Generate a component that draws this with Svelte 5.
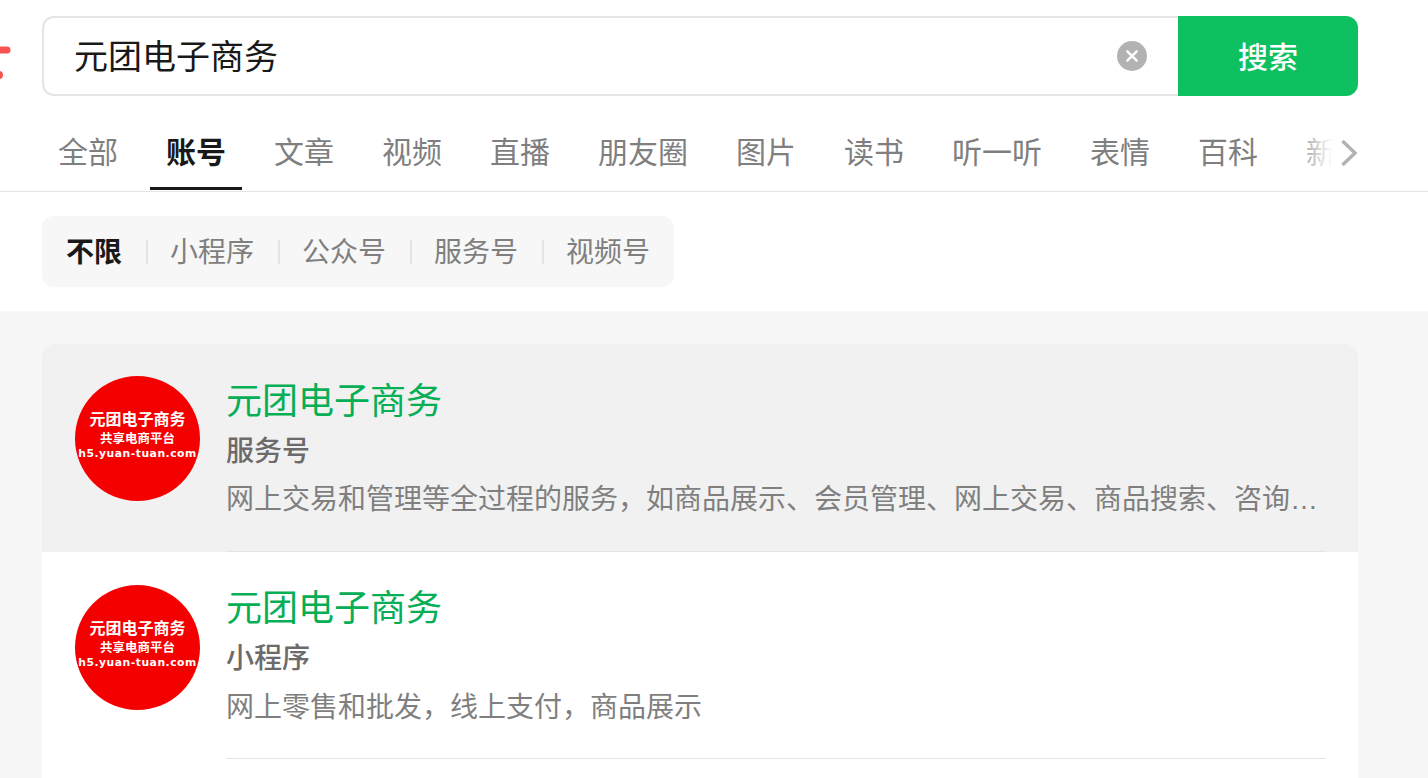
<script lang="ts">
	const tabs = ['全部', '账号', '文章', '视频', '直播', '朋友圈', '图片', '读书', '听一听', '表情', '百科', '新闻'];
	const filters = ['不限', '小程序', '公众号', '服务号', '视频号'];
	const results = [
		{
			kind: '服务号',
			desc: '网上交易和管理等全过程的服务，如商品展示、会员管理、网上交易、商品搜索、咨询洽谈和在线支付',
			active: true
		},
		{ kind: '小程序', desc: '网上零售和批发，线上支付，商品展示', active: false }
	];
</script>

<div class="page">
	<header class="search-row">
		<div class="logo">
			<svg width="42" height="80" viewBox="0 0 42 80" aria-hidden="true">
				<path d="M-4 34 L7 34" stroke="#fa5151" stroke-width="7" stroke-linecap="round" fill="none" />
				<path d="M-6 59 L-1 59" stroke="#fa5151" stroke-width="8" stroke-linecap="round" fill="none" />
			</svg>
		</div>
		<form class="search">
			<div class="field">
				<input type="text" value="元团电子商务" />
				<span class="clear">
					<svg width="30" height="30" viewBox="0 0 30 30" aria-hidden="true">
						<circle cx="15" cy="15" r="15" fill="#b2b2b2" />
						<path d="M10.3 10.3 L19.7 19.7 M19.7 10.3 L10.3 19.7" stroke="#fff" stroke-width="2.4" stroke-linecap="round" />
					</svg>
				</span>
			</div>
			<button type="button" class="submit">搜索</button>
		</form>
	</header>

	<nav class="tabs">
		<div class="tab-list">
			{#each tabs as tab, i}
				<span class="tab" class:current={i === 1}>{tab}</span>
			{/each}
		</div>
		<div class="more">
			<svg width="18" height="28" viewBox="0 0 18 28" aria-hidden="true">
				<path d="M2.5 2 L15 14 L2.5 26" stroke="#b2b2b2" stroke-width="3.4" fill="none" />
			</svg>
		</div>
	</nav>

	<section class="filter-wrap">
		<div class="filters">
			{#each filters as item, i}
				{#if i > 0}<span class="sep"></span>{/if}
				<span class="filter" class:on={i === 0}>{item}</span>
			{/each}
		</div>
	</section>

	<main class="results">
		<div class="card">
			{#each results as row}
				<article class="row" class:active={row.active}>
					<div class="avatar">
						<span class="a1">元团电子商务</span>
						<span class="a2">共享电商平台</span>
						<span class="a3">h5.yuan-tuan.com</span>
					</div>
					<div class="info">
						<h3>元团电子商务</h3>
						<p class="kind">{row.kind}</p>
						<p class="desc">{row.desc}</p>
					</div>
				</article>
			{/each}
		</div>
	</main>
</div>

<style>
	:global(body) {
		margin: 0;
		background: #fff;
	}
	.page {
		height: 778px;
		overflow: hidden;
		display: flex;
		flex-direction: column;
		font-family: "Liberation Sans", "Noto Sans CJK SC", sans-serif;
		color: #191919;
	}
	.search-row {
		display: flex;
		padding: 16px 70px 0 0;
	}
	.logo {
		width: 42px;
		height: 80px;
		flex: none;
	}
	.logo svg {
		display: block;
	}
	.search {
		flex: 1;
		display: flex;
		height: 80px;
		margin: 0;
	}
	.field {
		flex: 1;
		display: flex;
		align-items: center;
		box-sizing: border-box;
		border: 2px solid #e5e5e5;
		border-right: 0;
		border-radius: 12px 0 0 12px;
		padding: 0 31px 0 30px;
	}
	.field input {
		flex: 1;
		min-width: 0;
		border: 0;
		outline: 0;
		padding: 0 0 4px;
		background: none;
		font: inherit;
		font-size: 34px;
		color: #191919;
	}
	.clear {
		display: block;
		width: 30px;
		height: 30px;
	}
	.clear svg {
		display: block;
	}
	.submit {
		width: 180px;
		border: 0;
		border-radius: 0 12px 12px 0;
		background: #0dc160;
		color: #fff;
		font: inherit;
		font-size: 30px;
		font-weight: 500;
		padding: 0 0 2px;
	}
	.tabs {
		position: relative;
		height: 96px;
		box-sizing: border-box;
		border-bottom: 1px solid #e5e5e5;
		padding-left: 42px;
		padding-right: 70px;
	}
	.tab-list {
		display: flex;
		gap: 16px;
		height: 95px;
		overflow: hidden;
	}
	.tab {
		flex: none;
		box-sizing: border-box;
		height: 94px;
		padding: 35px 16px 0;
		font-size: 30px;
		line-height: 44px;
		color: #7f7f7f;
		border-bottom: 3px solid transparent;
	}
	.tab.current {
		color: #191919;
		font-weight: 700;
		border-bottom-color: #191919;
	}
	.more {
		position: absolute;
		top: 0;
		right: 70px;
		width: 60px;
		height: 95px;
		display: flex;
		justify-content: flex-end;
		align-items: flex-start;
		padding-top: 43px;
		box-sizing: border-box;
		background: linear-gradient(to right, rgba(255, 255, 255, 0.2), #fff 58%);
	}
	.filter-wrap {
		padding: 24px 70px 24px 42px;
	}
	.filters {
		display: inline-flex;
		align-items: center;
		height: 71px;
		padding: 0 24px;
		background: #f7f7f7;
		border-radius: 12px;
	}
	.filter {
		font-size: 28px;
		line-height: 40px;
		color: #7f7f7f;
		padding-top: 3px;
	}
	.filter.on {
		color: #191919;
		font-weight: 700;
	}
	.sep {
		width: 2px;
		height: 24px;
		margin: 0 22px 0 24px;
		background: #e5e5e5;
	}
	.results {
		flex: 1;
		background: #f7f7f7;
		padding: 33px 70px 0 42px;
	}
	.card {
		background: #fff;
		border-radius: 12px 12px 0 0;
		overflow: hidden;
		min-height: 500px;
	}
	.row {
		display: flex;
		padding-left: 33px;
	}
	.row.active {
		background: #f1f1f1;
	}
	.avatar {
		flex: none;
		width: 125px;
		height: 125px;
		margin-top: 32px;
		border-radius: 50%;
		background: #f40000;
		color: #fff;
		display: flex;
		flex-direction: column;
		align-items: center;
		justify-content: center;
		font-weight: 700;
		white-space: nowrap;
		overflow: hidden;
	}
	.row + .row .avatar {
		margin-top: 33px;
	}
	.a1 {
		font-size: 16px;
		line-height: 20px;
		margin-top: -7px;
	}
	.a2 {
		font-size: 12.5px;
		line-height: 16px;
		margin-top: 1px;
	}
	.a3 {
		font-size: 10.8px;
		line-height: 14px;
		letter-spacing: 0.5px;
		font-family: "DejaVu Sans", sans-serif;
		font-weight: 700;
	}
	.info {
		flex: 1;
		min-width: 0;
		margin: 0 32px 0 26px;
		padding: 33px 0 0;
		box-sizing: border-box;
		height: 208px;
		border-bottom: 1px solid #e5e5e5;
	}
	.row + .row .info {
		height: 207px;
		padding-top: 32px;
	}
	.row + .row .desc {
		padding-top: 1px;
	}
	h3 {
		margin: 0;
		font-size: 36px;
		line-height: 50px;
		font-weight: 400;
		color: #06ae56;
	}
	.kind {
		margin: 0;
		font-size: 28px;
		line-height: 50px;
		font-weight: 500;
		color: #6b6b6b;
	}
	.desc {
		margin: 0;
		font-size: 28px;
		line-height: 46px;
		color: #7f7f7f;
		white-space: nowrap;
		overflow: hidden;
		text-overflow: ellipsis;
	}
</style>
